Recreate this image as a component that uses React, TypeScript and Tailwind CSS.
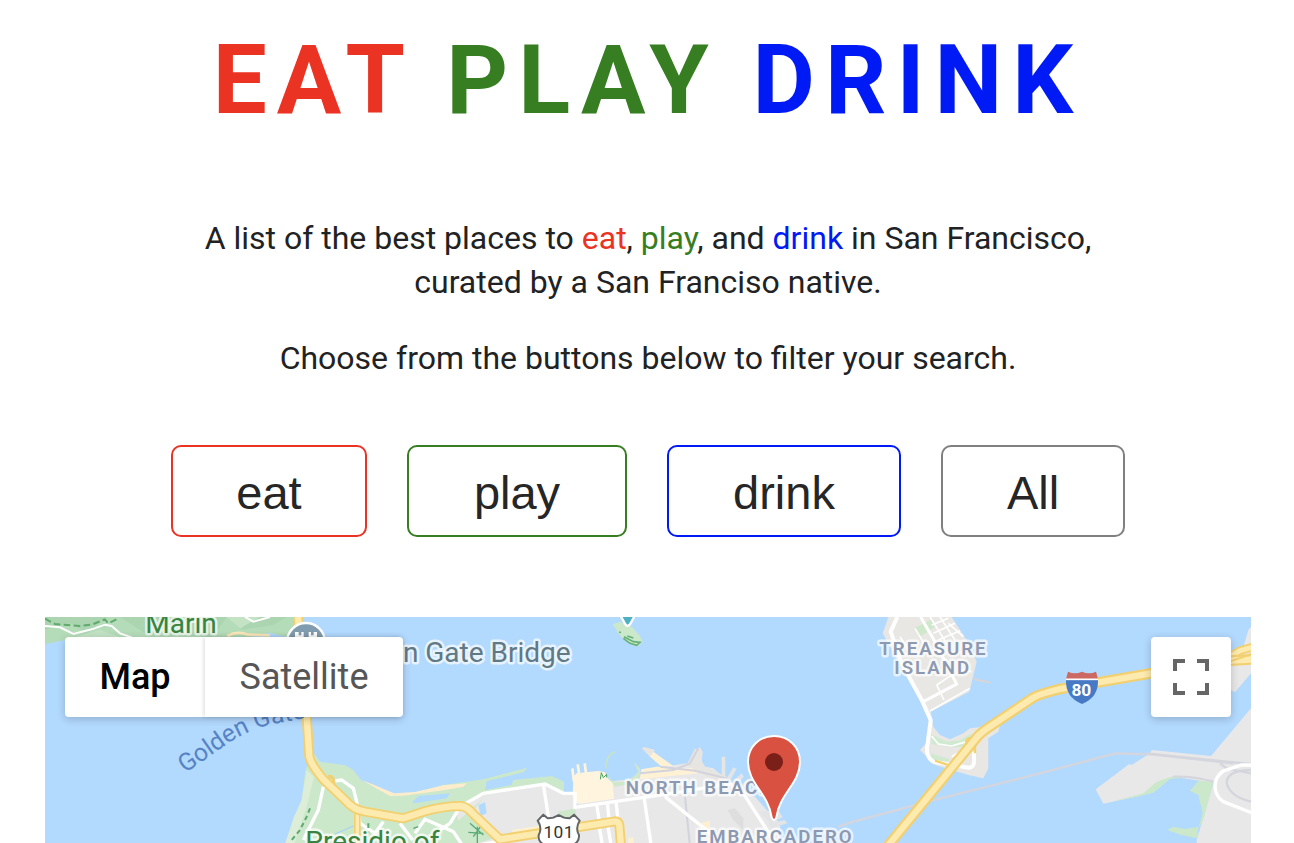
import React from "react";

const filters = [
  { label: "eat", style: "w-[196px] border-[#eb3323]" },
  { label: "play", style: "w-[220px] border-[#377e22]" },
  { label: "drink", style: "w-[234px] border-[#001af5]" },
  { label: "All", style: "w-[184px] border-[#808080]" },
];

const HIGHWAY =
  "M774 21 L800 320 L808 440 Q812 462 850 508 L915 570 Q940 600 975 605 L1090 625 L1150 605 Q1210 588 1262 588 Q1282 590 1300 612 L1380 688 L1725 634 Q1736 634 1738 646 L1744 720";
const BAY_BRIDGE =
  "M2540 712 L2808 385 Q2820 370 2845 353 L2975 266 Q2990 254 3060 237 L3333 190 L3570 152 L3640 148";

function MapArtwork() {
  return (
    <svg
      className="absolute inset-0 size-full"
      viewBox="15 21 3618 678"
      preserveAspectRatio="xMidYMin slice"
      fontFamily="Roboto, sans-serif"
      aria-hidden="true"
    >
      <rect x="15" y="21" width="3618" height="1400" fill="#b2d9fe" />

      {/* Marin headlands */}
      <path d="M15 21H768V82L735 80L690 68L640 78L610 90H75L15 102Z" fill="#b5dcb9" />
      <path d="M15 60L90 40L140 70L200 21H15Z M240 21L330 80H520L560 21Z M640 21L600 60L700 45L740 21Z" fill="#abd5b1" />
      <path d="M75 90L180 60L250 85L300 90Z M560 21L600 55L660 21Z" fill="#c3e3c4" />
      <path d="M15 48L60 52L100 72L155 58L195 44L215 48L240 70L275 82M615 21L640 35L690 21" fill="none" stroke="#fff" strokeWidth="6" />
      <path d="M15 26L45 42L120 48L155 44L195 28L205 40L238 24" fill="none" stroke="#5faa6c" strokeWidth="6" strokeDasharray="20 10" />
      <path d="M562 78Q590 62 625 74L690 76" fill="none" stroke="#fbe7b9" strokeWidth="8" />

      {/* Presidio and northern shoreline */}
      <path d="M822 430L840 455L915 466L940 480L965 512L1055 553L1130 548L1210 525L1330 508L1462 473L1450 487L1340 514L1335 540L1415 525L1420 510L1535 498L1572 515V560L1400 660L1400 710H732L765 625L785 570L796 480Z" fill="#cce8cb" />
      <path d="M800 480L785 570L762 620L732 710H760L800 590L822 500Z" fill="#dcedd8" />
      <path d="M1118 575L1135 558L1230 550L1220 565L1120 580Z" fill="#b2d9fe" />
      <path d="M965 510L990 520L1062 550L1125 546L1210 526L1280 520L1270 530L1215 540L1090 557L1050 558Z" fill="#fdedcc" />
      <path d="M1275 710L1250 610L1290 575L1335 548L1520 520L1570 552L1605 550V590L1700 515L1800 505L1803 480L1870 470L1940 460L2020 475L2060 510L2100 535L2145 560L2180 600L2220 640L2220 710Z" fill="#e8e8e8" />
      <path d="M1280 710L1235 650L1330 565L1300 600L1375 680Z" fill="#cce8cb" />
      <path d="M1315 585L1335 577L1340 610L1322 617Z" fill="#b2d9fe" />
      <path d="M1697 492L1720 515L1760 515L1785 495L1795 485L1780 455L1800 475V502L1770 522L1725 530Z M1555 605L1605 595L1610 625H1555Z" fill="#cfe7cb" />
      <path d="M1600 500L1610 490L1675 483L1695 487L1700 502L1718 520L1722 566L1612 582L1598 560Z" fill="#fff5de" />
      <path d="M1597 475L1602 515M1613 463L1620 510M1634 460L1641 510" stroke="#fff5de" strokeWidth="8" />
      <path d="M1728 425Q1700 430 1697 475" fill="none" stroke="#c5e3c7" strokeWidth="5" />
      <path d="M1681 508L1684 488L1690 503L1700 493V502" fill="none" stroke="#45a563" strokeWidth="3" />
      <path d="M1804 478L1850 470L1900 468L1840 425L1810 410L1830 440L1870 475L1960 475L1975 490L1800 508Z" fill="#fff1d4" />
      <path d="M1805 415L1830 440L1845 420L1815 412ZM1965 420L1980 412L1988 425L1985 455L1995 470H1975ZM2045 440H2056V500H2045ZM1965 415L1995 470L2070 505L2100 540L2000 500L1940 465Z" fill="#e7e5e2" />
      <path d="M2062 502L2080 472L2090 476L2072 510ZM2082 510L2105 490L2112 500L2090 524ZM2100 530L2125 505L2130 515L2110 540ZM2150 585L2180 572M2155 605L2215 600L2228 622L2190 640ZM2185 640L2235 630L2242 640L2195 655Z" fill="#e2e4e5" />
      <path d="M1975 415L1950 460L1900 480L1800 490M1860 470L1965 482L2060 505L2100 535M1935 560L1950 710" fill="none" stroke="#d2d3dc" strokeWidth="6" />
      <path d="M1415 660L1480 650L1540 640V660L1420 672Z M1980 640L2010 632V655L1980 662Z M1765 685L1780 680L1782 700H1765Z" fill="#fdf0d0" />
      <path d="M2062 600L2085 595L2110 625V660L2080 630Z" fill="#dedede" />
      <g fill="none" stroke="#fff" strokeWidth="10">
        <path d="M1230 640L1260 590L1330 550L1515 522L1570 550L1605 550V592L1930 545L2070 520L2110 550L2200 690" />
        <path d="M1510 522L1525 620M1670 582L1678 635M1702 578L1708 635M1728 572L1734 630M1812 560L1834 710M1875 560L2005 665L2060 710" />
        <path d="M1080 640L1118 690M1125 670L1155 628L1240 665L1270 710M1230 640L1200 660M1678 650L1688 710M1704 650L1714 710M1400 695V710M1290 710L1400 690" />
        <path d="M870 515L905 510L940 535L950 575L960 640L1005 670L1030 635M850 530L835 600L790 690" />
      </g>
      <path d="M1290 640L1330 675M1285 667L1330 670M1312 650V700M1300 680L1325 645M1120 655L1135 650" stroke="#58a973" strokeWidth="4" />
      <path d="M810 595L800 620L780 660L755 690M985 640V670" fill="none" stroke="#5caa72" strokeWidth="6" strokeDasharray="14 10" />
      <path d="M885 672L940 648" stroke="#a7d2f4" strokeWidth="4" />

      {/* Alcatraz */}
      <path d="M1718 42L1740 36L1775 50L1800 78L1808 95L1795 108L1775 104L1750 88L1735 70Z" fill="#cce8cb" />
      <path d="M1752 80L1780 95L1800 97L1790 106L1770 100L1750 85M1762 78L1780 84M1738 65L1742 69" fill="none" stroke="#65b17a" strokeWidth="5" />
      <path d="M1741 16L1756 43Q1763 52 1770 43L1785 16" fill="#4cb1c2" stroke="#fff" strokeWidth="7" />

      {/* Treasure Island and Yerba Buena */}
      <g transform="translate(2460 0)">
        <path d="M85 21H275L320 90L350 155L328 245L212 305L220 350L240 375L270 388L310 370L330 355L420 345L415 365L385 385V475L370 505L325 495L225 465L180 420L198 400L208 335L170 250L120 165L68 70Z" fill="#e8e7e4" />
        <path d="M163 55L215 28L225 50L178 82Z" fill="#cfe7cb" />
        <path d="M212 372L260 395L300 390L335 370L320 410L270 412L215 402ZM212 430L270 448L262 455L212 450Z" fill="#d0ead0" />
        <path d="M112 21L92 65L125 160L185 270L212 330L203 400Q195 440 220 455L325 473Q345 472 342 445V425" fill="none" stroke="#fff" strokeWidth="12" />
        <path d="M182 21L222 90L290 222L190 275" fill="none" stroke="#fff" strokeWidth="9" />
        <path d="M215 45L265 25M220 70L285 40M235 90L300 62M210 21L260 100M240 21L285 90M265 40L310 80M120 80L145 120M165 55L210 130M230 225L275 195M230 225L252 270M210 303L330 235M215 378L235 402L275 408L320 395M275 440L325 410M300 180L335 185" fill="none" stroke="#fff" strokeWidth="5" />
        <path d="M340 207L392 218" stroke="#d6d6d6" strokeWidth="6" />
        <path d="M225 452L280 470M345 390Q320 375 318 400L345 410L345 430" fill="none" stroke="#f3d16d" strokeWidth="7" />
      </g>

      {/* Oakland and Alameda */}
      <g transform="translate(2460 0)">
        <path d="M1173 50L1165 60L1150 110L1110 150L1112 240L1125 247L1173 190Z" fill="#e8e8e8" />
        <path d="M1173 295L1053 438L875 420L870 430L815 465L808 462L707 538L730 581L850 555L900 515L940 500L1020 512L1060 520L1010 690V720H1180Z" fill="#e8e8e8" />
        <path d="M760 574L850 550L890 515L940 498L1000 500L930 507L880 548L830 560ZM1060 515L1015 512L990 542L1015 555L1028 610L1015 655L1030 630ZM922 660L940 650L975 657L1015 650L1012 685L965 675Z" fill="#cce8cb" />
        <path d="M-65 650L-20 635L250 563L560 485L765 430L875 433L1120 460M860 430L1100 455L1173 462M940 500Q1000 498 1060 515M1080 460L1100 475L1173 490M1173 480Q1100 480 1100 520Q1110 560 1173 575" fill="none" stroke="#d5d6dd" strokeWidth="7" />
        <path d="M1180 465H1145L1090 483Q1065 500 1065 530Q1067 560 1090 575L1180 610" fill="none" stroke="#fff" strokeWidth="10" />
      </g>

      {/* Highways */}
      <g fill="none" strokeLinejoin="round">
        <path d="M952 605V710" stroke="#f3d06f" strokeWidth="20" />
        <path d="M952 605V710" stroke="#fdeaae" strokeWidth="10" />
        <path d="M865 500Q880 495 882 520" stroke="#f3d06f" strokeWidth="10" />
        <path d={HIGHWAY} stroke="#f3d06f" strokeWidth="30" />
        <path d={HIGHWAY} stroke="#fdeaae" strokeWidth="19" />
        <path d="M3550 152L3600 122L3650 108" stroke="#f3d06f" strokeWidth="26" />
        <path d="M3550 152L3600 122L3650 108" stroke="#fdeaae" strokeWidth="15" />
        <path d={BAY_BRIDGE} stroke="#f3d06f" strokeWidth="32" />
        <path d={BAY_BRIDGE} stroke="#fdeaae" strokeWidth="19" />
        <path d="M3560 158L3640 130" stroke="#f3d06f" strokeWidth="6" />
      </g>

      {/* Golden Gate Bridge landmark */}
      <circle cx="798" cy="96" r="57" fill="#819cae" stroke="#fff" strokeWidth="7" />
      <path d="M765 66H776V76H784V66H791V82H806V66H813V76H821V66H831V112H765Z" fill="#fff" />

      {/* Place labels */}
      <g stroke="#ffffff" strokeOpacity=".7" strokeWidth="15" strokeLinejoin="round" paintOrder="stroke">
        <text x="316" y="70" fontSize="84" fill="#37833f">Marin</text>
        <text x="796" y="722" fontSize="84" fill="#37833f">Presidio of</text>
        <text x="1592" y="155" fontSize="84" fill="#607985" textAnchor="end">Golden Gate Bridge</text>
        <g fontSize="56" fontWeight="600" fill="#8c99b1" letterSpacing="6">
          <text x="1757" y="551">NORTH BEACH</text>
          <text x="1970" y="699">EMBARCADERO</text>
          <text x="2518" y="135">TREASURE</text>
          <text x="2563" y="192">ISLAND</text>
        </g>
      </g>
      <path id="strait" d="M436 490L560 403Q620 362 690 344L840 315" fill="none" />
      <text fontSize="74" fill="#5783c5">
        <textPath href="#strait">Golden Gate</textPath>
      </text>

      {/* Route shields */}
      <path d="M1510 614L1523 625Q1541 625 1556 615Q1571 625 1589 625L1602 614L1619 632Q1605 654 1617 675Q1619 701 1588 708L1556 722L1524 708Q1493 701 1496 675Q1508 654 1493 632Z" fill="#fff" stroke="#626468" strokeWidth="6" strokeLinejoin="round" />
      <text x="1556" y="684" textAnchor="middle" fontSize="52" letterSpacing="1" fill="#333">101</text>
      <path d="M3084 185Q3105 194 3126 185Q3147 194 3168 185L3174 207H3078Z" fill="#cb6962" />
      <path d="M3078 210H3174Q3176 262 3126 282Q3076 262 3078 210Z" fill="#477ac5" />
      <path d="M3078 208H3174" stroke="#fff" strokeWidth="5" />
      <text x="3124" y="259" textAnchor="middle" fontSize="52" fontWeight="700" fill="#fff">80</text>

      {/* Selected place */}
      <path d="M2202 378C2157 378 2124 412 2124 455C2124 521 2184 548 2195 622Q2202 638 2209 622C2220 548 2280 521 2280 455C2280 412 2247 378 2202 378Z" fill="#d95140" stroke="#fff" strokeWidth="6" />
      <circle cx="2202" cy="456" r="27" fill="#7b1f19" />
    </svg>
  );
}

export default function App() {
  return (
    <main className="flex min-h-screen flex-col bg-white pr-[43px] pl-[45px] font-[Roboto,sans-serif] text-[#212224]">
      <header className="flex flex-col items-center pt-[22px] text-center">
        <h1 className="text-8xl leading-[116px] font-bold tracking-[10px]">
          <span className="text-[#eb3323]">EAT</span> <span className="text-[#377e22]">PLAY</span>{" "}
          <span className="text-[#001af5]">DRINK</span>
        </h1>
        <div className="mt-[78px] flex max-w-[960px] flex-col gap-8 text-[32px] leading-[44px]">
          <p>
            A list of the best places to <span className="text-[#eb3323]">eat</span>,{" "}
            <span className="text-[#377e22]">play</span>, and <span className="text-[#001af5]">drink</span> in San
            Francisco, curated by a San Franciso native.
          </p>
          <p>Choose from the buttons below to filter your search.</p>
        </div>
      </header>

      <nav aria-label="Filter places" className="mt-[65px] flex flex-wrap justify-center gap-10">
        {filters.map((filter) => (
          <button
            key={filter.label}
            type="button"
            className={`h-[92px] rounded-[10px] border-2 bg-white pt-1 font-['Liberation_Sans',sans-serif] text-[47px] leading-[60px] text-[#262626] ${filter.style}`}
          >
            {filter.label}
          </button>
        ))}
      </nav>

      <section aria-label="Map of San Francisco" className="relative mt-20 min-h-[226px] flex-1 overflow-hidden">
        <MapArtwork />
        <div className="relative flex items-start justify-between p-5">
          <div className="flex rounded-sm text-4xl shadow-[0_2px_8px_rgba(0,0,0,0.2)]">
            <button type="button" className="h-20 w-[140px] rounded-l-sm bg-white font-medium text-black">
              Map
            </button>
            <button
              type="button"
              className="h-20 w-[198px] rounded-r-sm bg-white text-[#565656] shadow-[-1px_0_4px_rgba(0,0,0,0.15)]"
            >
              Satellite
            </button>
          </div>
          <button
            type="button"
            aria-label="Toggle fullscreen view"
            className="flex size-20 items-center justify-center rounded-sm bg-white shadow-[0_2px_8px_rgba(0,0,0,0.2)]"
          >
            <svg viewBox="0 0 36 36" className="size-9" fill="none" stroke="#666" strokeWidth="4" aria-hidden="true">
              <path d="M2 12V2H12M24 2H34V12M34 24V34H24M12 34H2V24" />
            </svg>
          </button>
        </div>
      </section>
    </main>
  );
}
